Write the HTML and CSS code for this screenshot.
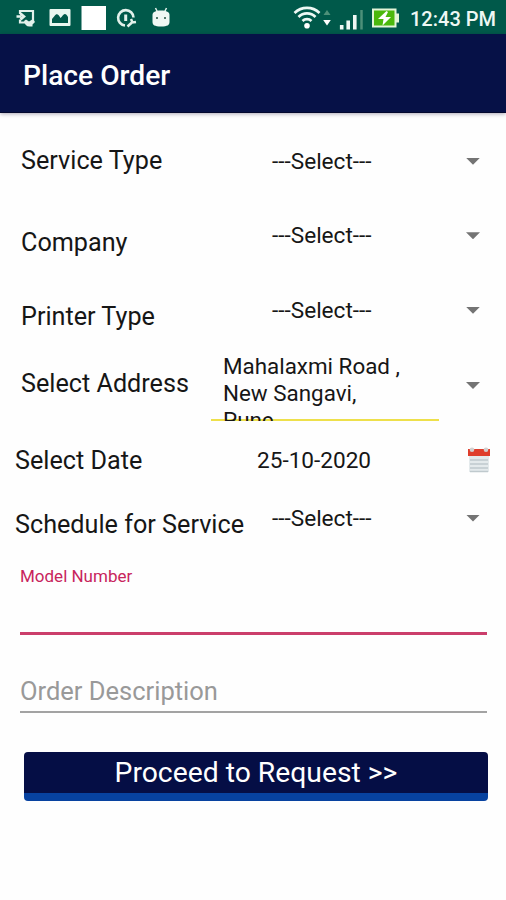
FILE: index.html
```html
<!DOCTYPE html>
<html lang="en">
<head>
<meta charset="utf-8">
<title>Place Order</title>
<link rel="stylesheet" href="styles.css">
</head>
<body>
<div class="status">
  <svg class="notifications" width="180" height="34" viewBox="0 0 180 34" fill="none" stroke="#e2f1eb">
    <path d="M20 14v-3h13v10" stroke-width="2.200"/>
    <path d="M20 19.500v3h5" stroke-width="2.200"/>
    <path d="M16.500 16.500h5M20.500 13.500l3.500 3-3.500 3" stroke-width="2.600"/>
    <path d="M24 21l2-1.500 3 2 4-2.500 2 3-2.500 2.500v2h-3c-3 0-5-2-5.500-5.500z" fill="#e2f1eb" stroke="none"/>
    <path d="M50.500 9h19a1 1 0 0 1 1 1v15a1 1 0 0 1-1 1h-19a1 1 0 0 1-1-1V10a1 1 0 0 1 1-1zM52 23h16v-6c-2-4-4-4-6-.500l-1.500 1.500c-2-4-4-5-6-2L52 19z" fill="#e9f7f0" fill-rule="evenodd" stroke="none"/>
    <path d="M81.500 6h24.500v24H81.500z" fill="#fff" stroke="none"/>
    <path d="M125 25.500a7.700 7.700 0 1 1 8.500-8" stroke-width="2.600"/>
    <path d="M125.700 14.500v6.500" stroke-width="3"/>
    <path d="M127.500 26.500l5-4.500M131 19l1.500 3.500 3.500-.500" stroke-width="2.500"/>
    <path d="M155.500 8l2 4M166.500 8l-2 4" stroke-width="1.500"/>
    <path d="M152.500 15c0-3 3-4.500 8.500-4.500s8.500 1.500 8.500 4.500v7c0 3-2 4.500-8.500 4.500s-8.500-1.500-8.500-4.500z" fill="#f0f7f4" stroke="none"/>
    <path d="M156 18h2M164 18h2" stroke="#53786b" stroke-width="2"/>
  </svg>
  <svg class="system" width="110" height="34" viewBox="0 0 110 34" fill="none" stroke="#eef8f4">
    <path d="M1.500 13a18 18 0 0 1 25 0M5.500 17a12 12 0 0 1 17 0M9.500 21a6.500 6.500 0 0 1 9 0" stroke-width="2.700"/>
    <circle cx="14" cy="25.800" r="2.800" fill="#fff" stroke="none"/>
    <path d="M34 10l3.500 5h-7z" fill="#4d9079" stroke="none"/>
    <path d="M34 25.500l3.800-5.500h-7.600z" fill="#fff" stroke="none"/>
    <path d="M48.700 25v4.500M55.200 20.500v9M61.800 15v14.500" stroke-width="3.600"/>
    <path d="M68.500 10v19.500" stroke="#4d9079" stroke-width="2.500"/>
    <path d="M79 8.500h24.500v5h2.500v9h-2.500v5H79z" fill="#e4f5d8" stroke="none"/>
    <path d="M81 10.500h20.500v15H81z" fill="#4bb80d" stroke="none"/>
    <path d="M93.500 11l-8.500 8h5.500l-1 6.500 8.500-8.500h-5.500l2.500-5z" fill="#fff" stroke="none"/>
  </svg>
  <span class="clock">12:43 PM</span>
</div>
<header class="appbar">Place Order</header>
<main>
  <div class="row first"><span class="label">Service Type</span><span class="value">---Select---</span><i class="arrow"></i></div>
  <div class="row"><span class="label low">Company</span><span class="value">---Select---</span><i class="arrow"></i></div>
  <div class="row"><span class="label low">Printer Type</span><span class="value">---Select---</span><i class="arrow"></i></div>
  <div class="row address"><span class="label">Select Address</span><span class="value box">Mahalaxmi Road ,<br>New Sangavi,<br>Pune</span><i class="arrow"></i></div>
  <div class="row date"><span class="label">Select Date</span><span class="value">25-10-2020</span>
    <svg class="calendar" width="24" height="27" viewBox="0 0 24 27">
      <path d="M2 9h20v16H2z" fill="#e4eaec"/>
      <path d="M3 13h18M3 17h18M3 21h18M3 24.500h18" stroke="#bfc9cd" stroke-width="1.300"/>
      <path d="M1 2h22v7H1z" fill="#df3e2c"/>
      <circle cx="5" cy="2.700" r="2.300" fill="#d3cfcf"/>
      <circle cx="19" cy="2.700" r="2.300" fill="#d3cfcf"/>
    </svg>
  </div>
  <div class="row schedule"><span class="label">Schedule for Service</span><span class="value">---Select---</span><i class="arrow"></i></div>
  <div class="field model">Model Number</div>
  <div class="field description">Order Description</div>
  <div class="button">Proceed to Request &gt;&gt;</div>
</main>
</body>
</html>
```
FILE: styles.css
```css
* { box-sizing: border-box; }
body {
  margin: 0;
  height: 900px;
  background: #fefefe;
  color: #161616;
  font-family: Roboto, sans-serif;
  overflow: hidden;
}
.status {
  display: flex;
  height: 34px;
  background: #00594a;
}
.notifications { flex: none; }
.system { flex: none; margin-left: 113px; }
.clock {
  margin-left: 7px;
  color: #eef8f4;
  font-size: 20px;
  font-weight: 500;
  line-height: 38px;
  white-space: nowrap;
}
.appbar {
  height: 79px;
  padding-left: 23px;
  background: #061147;
  border-bottom: 1px solid #03082e;
  box-shadow: 0 1px 4px rgba(20, 10, 50, .35);
  color: #fff;
  font-size: 28.2px;
  font-weight: 500;
  line-height: 83px;
}
.row {
  display: grid;
  grid-template-columns: 251px 194px 1fr;
  align-items: center;
  height: 74.5px;
  padding-left: 21px;
}
.first { margin-top: 11px; }
.label {
  font-size: 25.2px;
  line-height: 30px;
  white-space: nowrap;
}
.low { padding-top: 14px; }
.value {
  font-size: 22.6px;
  line-height: 27px;
  white-space: nowrap;
}
.arrow {
  width: 14px;
  height: 7px;
  background: #747474;
  clip-path: polygon(0 0, 100% 0, 50% 100%);
}
.address {
  grid-template-columns: 190px 228px 1fr;
  height: 76px;
}
.address .label { padding-bottom: 4px; }
.address .arrow { margin-left: 27px; }
.box {
  align-self: start;
  height: 73px;
  padding: 5.5px 0 0 12px;
  overflow: hidden;
  background: linear-gradient(#eee04b, #eee04b) 0 71px / 100% 2px no-repeat;
  font-size: 22.4px;
}
.date {
  grid-template-columns: 242px 210px 1fr;
  height: 73px;
  padding-left: 15px;
}
.date .label { padding-top: 2px; }
.schedule {
  grid-template-columns: 257px 194px 1fr;
  height: 42px;
  padding-left: 15px;
}
.schedule .label { padding-top: 13px; }
.field { margin: 0 19px 0 20px; }
.model {
  height: 96.5px;
  padding-top: 26px;
  border-bottom: 3px solid #cb3e6b;
  color: #c8245c;
  font-size: 17px;
  line-height: 22px;
}
.description {
  height: 78px;
  padding-top: 40px;
  border-bottom: 2px solid #a3a3a3;
  color: #999;
  font-size: 25.5px;
  line-height: 32px;
}
.button {
  height: 49px;
  margin: 39px 18px 0 24px;
  border-bottom: 8px solid #0742a0;
  border-radius: 4px;
  background: #050e45;
  color: #fff;
  font-size: 28.3px;
  line-height: 42px;
  text-align: center;
}
```
